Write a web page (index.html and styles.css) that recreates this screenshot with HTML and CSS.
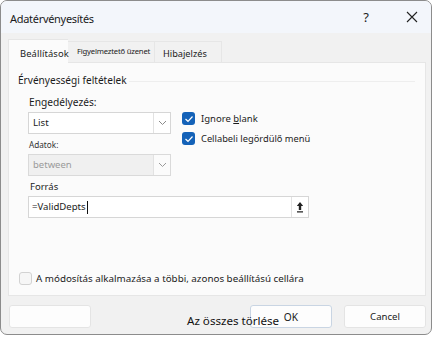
FILE: index.html
```html
<!DOCTYPE html>
<html>
<head>
<meta charset="utf-8">
<link rel="stylesheet" href="styles.css">
</head>
<body>
<div class="window">
  <div class="titlebar">
    <span class="title">Adatérvényesítés</span>
    <span class="help">?</span>
    <span class="close">
      <svg width="12" height="12" viewBox="0 0 12 12"><path d="M1 1L11 11M11 1L1 11" stroke="#222" stroke-width="1.1" fill="none"/></svg>
    </span>
  </div>
  <div class="content">
    <div class="tabs">
      <div class="tab active">Beállítások</div>
      <div class="tab small">Figyelmeztető üzenet</div>
      <div class="tab hib">Hibajelzés</div>
    </div>
    <div class="panel">
      <div class="group-label"><span>Érvényességi feltételek</span><span class="group-line"></span></div>
      <div class="criteria">
        <div class="left-col">
          <div class="label">Engedélyezés:</div>
          <div class="combo">
            <span class="combo-text">List</span>
            <span class="combo-btn"><svg width="9" height="6" viewBox="0 0 9 6"><path d="M1 1L4.5 4.5L8 1" stroke="#8a8a8a" stroke-width="1" fill="none"/></svg></span>
          </div>
          <div class="label small-label">Adatok:</div>
          <div class="combo disabled">
            <span class="combo-text">between</span>
            <span class="combo-btn"><svg width="9" height="6" viewBox="0 0 9 6"><path d="M1 1L4.5 4.5L8 1" stroke="#9a9a9a" stroke-width="1" fill="none"/></svg></span>
          </div>
        </div>
        <div class="right-col">
          <label class="check"><span class="box on"><svg width="10" height="8" viewBox="0 0 10 8"><path d="M1.5 4L4 6.3L8.5 1.5" stroke="#fff" stroke-width="1.2" fill="none"/></svg></span><span>Ignore <u>b</u>lank</span></label>
          <label class="check cella"><span class="box on"><svg width="10" height="8" viewBox="0 0 10 8"><path d="M1.5 4L4 6.3L8.5 1.5" stroke="#fff" stroke-width="1.2" fill="none"/></svg></span><span>Cellabeli legördülő menü</span></label>
        </div>
      </div>
      <div class="label source-label">Forrás</div>
      <div class="source">
        <span class="source-text">=ValidDepts<span class="caret"></span></span>
        <span class="source-btn"><svg width="8" height="12" viewBox="0 0 8 12"><path d="M4 1L0.8 5H2.8V9H5.2V5H7.2Z" fill="#222"/><path d="M1 10.8H7" stroke="#222" stroke-width="1.2"/></svg></span>
      </div>
      <label class="check apply"><span class="box off"></span><span>A módosítás alkalmazása a többi, azonos beállítású cellára</span></label>
    </div>
    <div class="buttons">
      <div class="btn clear"><span class="clear-text">Az összes törlése</span></div>
      <div class="spacer"></div>
      <div class="btn ok">OK</div>
      <div class="btn">Cancel</div>
    </div>
  </div>
</div>
</body>
</html>
```
FILE: styles.css
```css
* { box-sizing: border-box; }
html, body { margin: 0; padding: 0; }
body {
  width: 434px;
  height: 337px;
  background: #ffffff;
  font-family: "Noto Sans", "Open Sans", sans-serif;
  font-size: 10px;
  color: #1b1b1b;
  overflow: hidden;
}
.window {
  width: 432px;
  height: 335px;
  border: 1px solid #8c8c8c;
  border-radius: 7px;
  background: #f1f1f1;
  overflow: hidden;
  display: flex;
  flex-direction: column;
}
.titlebar {
  height: 32px;
  background: #f3f6fb;
  display: flex;
  align-items: center;
  padding-left: 9px;
  flex: none;
}
.title { font-size: 11px; flex: 1; letter-spacing: -0.3px; padding-top: 2px; }
.help { font-size: 13px; width: 14px; margin-right: 33px; text-align: center; }
.close { width: 12px; height: 12px; margin-right: 13px; display: flex; }
.content {
  flex: 1;
  display: flex;
  flex-direction: column;
  padding: 6px 5px 0 7px;
}
.tabs { display: flex; height: 23px; align-items: flex-end; }
.tab {
  height: 21px;
  display: flex;
  align-items: center;
  border: 1px solid #e6e6e6;
  border-bottom: none;
  background: #f1f1f1;
  white-space: nowrap;
  flex: none;
}
.tab.active {
  width: 60px;
  height: 24px;
  background: #fbfbfb;
  padding: 3px 0 0 11px;
  font-size: 9.4px;
  letter-spacing: 0.1px;
  position: relative;
  z-index: 1;
  margin-bottom: -1px;
  border-right: none;
}
.tab.small { width: 87px; font-size: 7.7px; padding: 0 0 2px 9px; letter-spacing: -0.2px; border-left: none; }
.tab.hib { width: 67px; font-size: 9.2px; padding: 2px 0 0 8px; border-left: none; }
.panel {
  height: 234px;
  background: #fbfbfb;
  border: 1px solid #e6e6e6;
  padding: 10px 0 0 9px;
  display: flex;
  flex-direction: column;
}
.group-label { display: flex; align-items: center; font-size: 10.1px; height: 14px; }
.group-line { flex: 1; height: 1px; background: #eeeeee; margin: 2px 10px 0 2px; }
.criteria { display: flex; padding-left: 10px; margin-top: 8px; }
.left-col { width: 143px; display: flex; flex-direction: column; }
.label { font-size: 10.2px; height: 15px; line-height: 15px; padding-left: 1px; }
.small-label { font-size: 8.2px; margin-top: 3px; height: 15px; color: #333; }
.combo {
  height: 22px;
  border: 1px solid #d6d6d6;
  background: #fff;
  display: flex;
  margin-top: 2px;
}
.combo-text { flex: 1; padding-left: 4px; line-height: 20px; font-size: 9.7px; }
.combo-btn {
  width: 17px;
  border-left: 1px solid #e2e2e2;
  display: flex;
  align-items: center;
  justify-content: center;
}
.combo.disabled { background: #f0f0f0; border-color: #dadada; }
.combo.disabled .combo-text { color: #9a9a9a; font-size: 9.5px; }
.combo.disabled .combo-btn { background: #fbfbfb; }
.right-col { margin-left: 11px; padding-top: 17px; display: flex; flex-direction: column; gap: 7px; }
.check { display: flex; align-items: center; gap: 6px; font-size: 9.5px; height: 13px; }
.check.cella { font-size: 9.3px; }
.box {
  width: 13px; height: 13px; border-radius: 3px;
  display: flex; align-items: center; justify-content: center; flex: none;
}
.box.on { background: #1462b8; }
.box.off { background: #f6f6f6; border: 1px solid #d2d2d2; }
.source-label { margin: 3px 0 0 11px; font-size: 9.5px; }
.source {
  margin: 2px 0 0 10px;
  width: 281px;
  height: 22px;
  border: 1px solid #d6d6d6;
  background: #fff;
  display: flex;
}
.source-text { flex: 1; padding-left: 3px; line-height: 20px; font-size: 9.6px; display: flex; align-items: center; }
.caret { width: 1px; height: 13px; background: #111; margin-left: 1px; }
.source-btn {
  width: 17px;
  border-left: 1px solid #e2e2e2;
  display: flex; align-items: center; justify-content: center;
}
.apply { margin-top: 54px; margin-left: 1px; gap: 4px; font-size: 9.8px; }
.buttons { display: flex; margin-top: 9px; height: 23px; align-items: stretch; }
.btn {
  width: 82px;
  height: 23px;
  background: #fdfdfd;
  border: 1px solid #e4e4e4;
  border-radius: 3px;
  display: flex; align-items: center; justify-content: center;
  font-size: 9.6px;
  margin-left: 12px;
  flex: none;
}
.btn.clear { margin-left: 1px; position: relative; }
.clear-text {
  position: absolute; left: 177px; top: 6px;
  font-size: 11.6px; white-space: nowrap; color: #111; line-height: 18px;
}
.spacer { flex: 1; }
.btn.ok { border-color: #c9d5e3; font-size: 10.2px; }
```
